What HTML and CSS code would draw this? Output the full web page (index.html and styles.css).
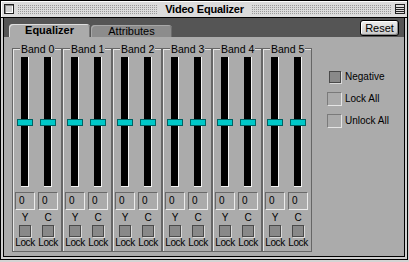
FILE: index.html
```html
<!DOCTYPE html>
<html lang="en">
<head>
    <meta charset="UTF-8">
    <title>Video Equalizer</title>
    <link rel="stylesheet" href="styles.css">
</head>
<body>
    <div class="window">
        <div class="titlebar">
            <span class="close-box"></span>
            <span class="stripes"></span>
            <span class="title">Video Equalizer</span>
            <span class="stripes"></span>
            <span class="collapse-box">
                <svg width="10" height="10" viewBox="0 0 10 10">
                    <rect x="0.5" y="0.5" width="9" height="9" fill="#ddd" stroke="#222"/>
                    <path d="M1 3.5h8M1 5.5h8M1 7.5h8" stroke="#222"/>
                </svg>
            </span>
        </div>

        <div class="frame">
            <div class="tabbar">
                <div class="tab tab-active">Equalizer</div>
                <div class="tab">Attributes</div>
                <button class="reset-button">Reset</button>
            </div>

            <div class="panel">
                <div class="bands">
                    <div class="band">
                        <div class="band-title"><span>Band 0</span></div>
                        <div class="band-body">
                            <div class="channel">
                                <div class="track"><span class="thumb"></span></div>
                                <div class="value">0</div>
                                <div class="channel-name">Y</div>
                                <span class="check"></span>
                                <div class="lock">Lock</div>
                            </div>
                            <div class="channel">
                                <div class="track"><span class="thumb"></span></div>
                                <div class="value">0</div>
                                <div class="channel-name">C</div>
                                <span class="check"></span>
                                <div class="lock">Lock</div>
                            </div>
                        </div>
                    </div>
                    <div class="band">
                        <div class="band-title"><span>Band 1</span></div>
                        <div class="band-body">
                            <div class="channel">
                                <div class="track"><span class="thumb"></span></div>
                                <div class="value">0</div>
                                <div class="channel-name">Y</div>
                                <span class="check"></span>
                                <div class="lock">Lock</div>
                            </div>
                            <div class="channel">
                                <div class="track"><span class="thumb"></span></div>
                                <div class="value">0</div>
                                <div class="channel-name">C</div>
                                <span class="check"></span>
                                <div class="lock">Lock</div>
                            </div>
                        </div>
                    </div>
                    <div class="band">
                        <div class="band-title"><span>Band 2</span></div>
                        <div class="band-body">
                            <div class="channel">
                                <div class="track"><span class="thumb"></span></div>
                                <div class="value">0</div>
                                <div class="channel-name">Y</div>
                                <span class="check"></span>
                                <div class="lock">Lock</div>
                            </div>
                            <div class="channel">
                                <div class="track"><span class="thumb"></span></div>
                                <div class="value">0</div>
                                <div class="channel-name">C</div>
                                <span class="check"></span>
                                <div class="lock">Lock</div>
                            </div>
                        </div>
                    </div>
                    <div class="band">
                        <div class="band-title"><span>Band 3</span></div>
                        <div class="band-body">
                            <div class="channel">
                                <div class="track"><span class="thumb"></span></div>
                                <div class="value">0</div>
                                <div class="channel-name">Y</div>
                                <span class="check"></span>
                                <div class="lock">Lock</div>
                            </div>
                            <div class="channel">
                                <div class="track"><span class="thumb"></span></div>
                                <div class="value">0</div>
                                <div class="channel-name">C</div>
                                <span class="check"></span>
                                <div class="lock">Lock</div>
                            </div>
                        </div>
                    </div>
                    <div class="band">
                        <div class="band-title"><span>Band 4</span></div>
                        <div class="band-body">
                            <div class="channel">
                                <div class="track"><span class="thumb"></span></div>
                                <div class="value">0</div>
                                <div class="channel-name">Y</div>
                                <span class="check"></span>
                                <div class="lock">Lock</div>
                            </div>
                            <div class="channel">
                                <div class="track"><span class="thumb"></span></div>
                                <div class="value">0</div>
                                <div class="channel-name">C</div>
                                <span class="check"></span>
                                <div class="lock">Lock</div>
                            </div>
                        </div>
                    </div>
                    <div class="band">
                        <div class="band-title"><span>Band 5</span></div>
                        <div class="band-body">
                            <div class="channel">
                                <div class="track"><span class="thumb"></span></div>
                                <div class="value">0</div>
                                <div class="channel-name">Y</div>
                                <span class="check"></span>
                                <div class="lock">Lock</div>
                            </div>
                            <div class="channel">
                                <div class="track"><span class="thumb"></span></div>
                                <div class="value">0</div>
                                <div class="channel-name">C</div>
                                <span class="check"></span>
                                <div class="lock">Lock</div>
                            </div>
                        </div>
                    </div>
                </div>

                <div class="options">
                    <div class="option">
                        <span class="option-slot"><span class="check"></span></span>
                        <span>Negative</span>
                    </div>
                    <div class="option">
                        <span class="option-slot"><span class="flat-button"></span></span>
                        <span>Lock All</span>
                    </div>
                    <div class="option">
                        <span class="option-slot"><span class="flat-button"></span></span>
                        <span>Unlock All</span>
                    </div>
                </div>
            </div>
        </div>
    </div>
</body>
</html>
```

FILE: styles.css
```css
* {
    margin: 0;
    padding: 0;
    box-sizing: border-box;
}

body {
    font-family: "Liberation Sans", Arial, sans-serif;
    font-size: 10px;
    color: #000;
    background-color: #d4d4d4;
}

.window {
    width: 408px;
    height: 260px;
    border: 1px solid #000;
    background-color: #cfcfcf;
    display: flex;
    flex-direction: column;
}

/* title bar */
.titlebar {
    height: 17px;
    border-bottom: 1px solid #000;
    background-color: #dcdcdc;
    box-shadow: inset 1px 1px 0 #fff;
    display: flex;
    align-items: center;
    gap: 3px;
    padding: 0 2px 0 3px;
}

.close-box {
    width: 10px;
    height: 10px;
    border: 1px solid #222;
    background-color: #d0d0d0;
    box-shadow: inset 1px 1px 0 #8a8a8a, inset -1px -1px 0 #fff;
}

.stripes {
    flex: 1;
    height: 11px;
    background-image:
        linear-gradient(90deg, #dcdcdc 1px, transparent 1px),
        linear-gradient(#dcdcdc 1px, #9a9a9a 1px);
    background-size: 2px 2px;
}

.title {
    padding: 0 4px;
    font-size: 11px;
    font-weight: bold;
    letter-spacing: -0.2px;
    line-height: 14px;
}

.collapse-box {
    display: flex;
}

/* window body */
.frame {
    flex: 1;
    margin: 0 2px 2px;
    border: 1px solid #000;
    border-top: 0;
    display: flex;
    flex-direction: column;
}

.tabbar {
    height: 19px;
    background-color: #555;
    display: flex;
    align-items: flex-end;
    padding-left: 5px;
}

.tab {
    width: 81px;
    height: 12px;
    margin-left: 1px;
    border-radius: 4px 4px 0 0;
    background-color: #8c8c8c;
    box-shadow: inset 1px 1px 0 #a8a8a8, inset -1px 0 0 #6c6c6c;
    font-size: 11px;
    line-height: 12px;
    text-align: center;
}

.tab-active {
    height: 13px;
    margin-left: 0;
    background-color: #ababab;
    box-shadow: inset 1px 1px 0 #dedede, inset -1px 0 0 #777;
    font-weight: bold;
    line-height: 13px;
}

.reset-button {
    align-self: flex-start;
    margin: 2px 5px 0 auto;
    width: 39px;
    height: 16px;
    border: 1px solid #000;
    border-radius: 3px;
    background: linear-gradient(#eee, #c8c8c8);
    box-shadow: inset 1px 1px 0 #fff, inset -1px -1px 0 #888;
    font-family: "Liberation Sans", Arial, sans-serif;
    font-size: 11px;
    line-height: 13px;
    color: #000;
}

.panel {
    flex: 1;
    background-color: #ababab;
    display: flex;
    padding: 6px 0 4px 8px;
}

/* band groups */
.bands {
    display: flex;
}

.band {
    width: 50px;
    display: flex;
    flex-direction: column;
}

.band-title {
    height: 12px;
    display: flex;
    line-height: 12px;
}

.band-title::before,
.band-title::after {
    content: "";
    height: 6px;
    align-self: flex-end;
    border-top: 1px solid #666;
    box-shadow: inset 0 1px 0 #e6e6e6;
}

.band-title::before {
    width: 7px;
    border-left: 1px solid #666;
    box-shadow: inset 1px 1px 0 #e6e6e6;
}

.band-title::after {
    flex: 1;
    border-right: 1px solid #666;
}

.band-title span {
    padding: 0 1px;
    font-size: 10.5px;
}

.band-body {
    flex: 1;
    border: 1px solid #666;
    border-top: 0;
    box-shadow: inset 1px 0 0 #e6e6e6;
    display: flex;
    gap: 3px;
    padding: 2px 0 2px 2px;
}

.channel {
    width: 20px;
    display: flex;
    flex-direction: column;
    align-items: center;
}

.track {
    position: relative;
    width: 8px;
    height: 130px;
    background-color: #000;
    border-right: 1px solid #f2f2f2;
    border-bottom: 1px solid #f2f2f2;
}

.thumb {
    position: absolute;
    left: -4px;
    top: 62px;
    width: 16px;
    height: 7px;
    background-color: #00c8c8;
    border: 1px solid #006262;
}

.value {
    width: 20px;
    height: 18px;
    margin-top: 5px;
    border: 1px solid #6a6a6a;
    border-right-color: #ececec;
    border-bottom-color: #ececec;
    padding-left: 3px;
    line-height: 16px;
    align-self: flex-start;
}

.channel-name {
    margin-top: 2px;
    line-height: 12px;
}

.check {
    display: block;
    width: 12px;
    height: 12px;
    margin-top: 1px;
    border: 1px solid #4a4a4a;
    background-color: #898989;
    box-shadow: 1px 1px 0 #dadada;
}

.lock {
    line-height: 12px;
    letter-spacing: -0.4px;
    white-space: nowrap;
}

/* right-hand options */
.options {
    margin: 26px 0 0 15px;
    display: flex;
    flex-direction: column;
    gap: 7px;
}

.option {
    height: 15px;
    display: flex;
    align-items: center;
    gap: 3px;
}

.option-slot {
    width: 15px;
    display: flex;
    justify-content: center;
}

.option .check {
    margin-top: 0;
}

.flat-button {
    width: 15px;
    height: 14px;
    border: 1px solid #7a7a7a;
    border-right-color: #e4e4e4;
    border-bottom-color: #e4e4e4;
}
```
